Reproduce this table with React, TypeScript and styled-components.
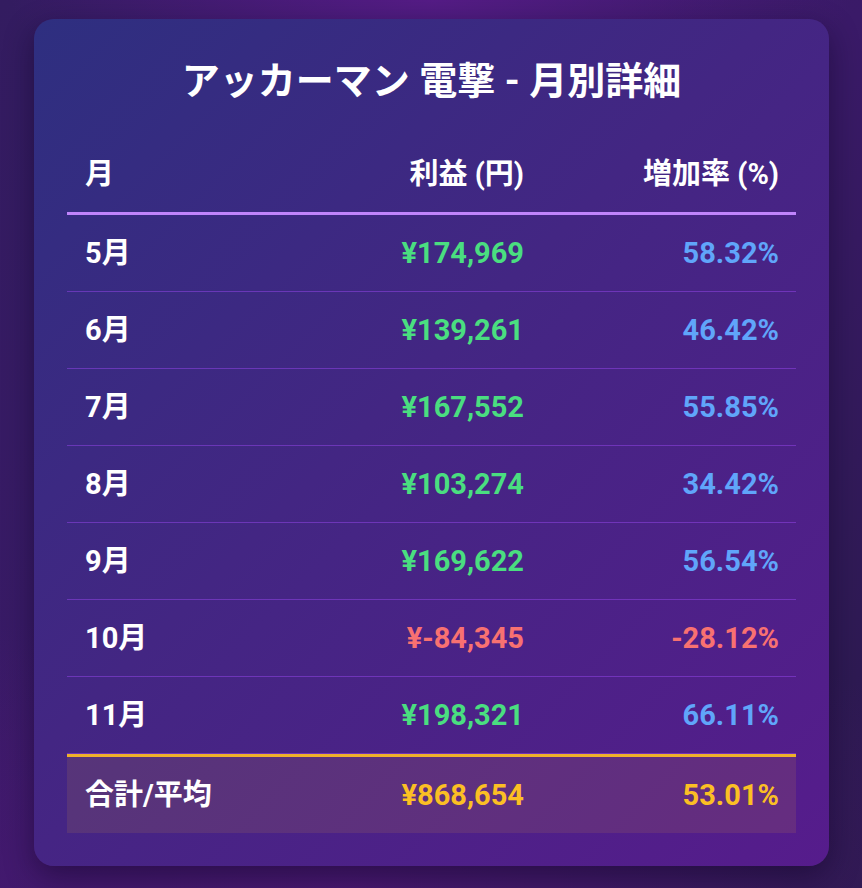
import React from "react";
import styled, { createGlobalStyle } from "styled-components";

const GlobalStyle = createGlobalStyle`
  html, body { margin: 0; padding: 0; }
  body {
    min-height: 888px;
    background:
      radial-gradient(ellipse 420px 120px at 50% 0%, rgba(90, 28, 140, 0.85), rgba(90, 28, 140, 0) 100%),
      radial-gradient(ellipse 700px 300px at 40% 100%, rgba(80, 24, 120, 0.7), rgba(80, 24, 120, 0) 100%),
      linear-gradient(135deg, #331c60 0%, #3a1a68 50%, #2a1a4c 100%);
    font-family: "Roboto", "Noto Sans CJK JP", sans-serif;
  }
`;

const Page = styled.div`
  padding: 19px 33px 21px 34px;
`;

const Card = styled.section`
  border-radius: 20px;
  padding: 32px 33px 33px;
  background: linear-gradient(135deg, #2e2f80 0%, #432683 45%, #561c8c 100%);
  box-shadow: 0 10px 30px rgba(10, 0, 30, 0.45);
`;

const Title = styled.h1`
  margin: 8px 0 33px;
  text-align: center;
  color: #ffffff;
  font-size: 38px;
  line-height: 44px;
  font-weight: 700;
  font-family: "Roboto", "Noto Sans CJK JP", sans-serif;
`;

const Row = styled.div<{ $variant?: "head" | "body" | "foot" }>`
  display: grid;
  grid-template-columns: 1fr 220px 255px;
  border-bottom: ${(p) =>
    p.$variant === "head"
      ? "3px solid #c084fc"
      : p.$variant === "foot"
      ? "none"
      : "1px solid rgba(150, 70, 235, 0.5)"};
  border-top: ${(p) => (p.$variant === "foot" ? "3px solid #efb12a" : "none")};
  background: ${(p) =>
    p.$variant === "foot" ? "rgba(251, 191, 36, 0.1)" : "transparent"};
`;

const Cell = styled.div<{ $align?: "left" | "right"; $color?: string }>`
  padding: 23px 17px 23px 18px;
  font-size: 29px;
  line-height: 30px;
  font-weight: 700;
  text-align: ${(p) => p.$align ?? "left"};
  color: ${(p) => p.$color ?? "#ffffff"};
  white-space: nowrap;
`;

const GREEN = "#4ade80";
const BLUE = "#60a5fa";
const RED = "#f87171";
const GOLD = "#fbbf24";

const rows = [
  { m: "5月", p: 174969, r: "58.32" },
  { m: "6月", p: 139261, r: "46.42" },
  { m: "7月", p: 167552, r: "55.85" },
  { m: "8月", p: 103274, r: "34.42" },
  { m: "9月", p: 169622, r: "56.54" },
  { m: "10月", p: -84345, r: "-28.12" },
  { m: "11月", p: 198321, r: "66.11" },
];

const yen = (n: number) => "¥" + n.toLocaleString("en-US");

export default function App() {
  return (
    <>
      <GlobalStyle />
      <Page>
        <Card>
          <Title>アッカーマン 電撃 - 月別詳細</Title>
          <div>
            <Row $variant="head">
              <Cell>月</Cell>
              <Cell $align="right">利益 (円)</Cell>
              <Cell $align="right">増加率 (%)</Cell>
            </Row>
            {rows.map((r) => {
              const neg = r.p < 0;
              return (
                <Row key={r.m} $variant="body">
                  <Cell>{r.m}</Cell>
                  <Cell $align="right" $color={neg ? RED : GREEN}>
                    {yen(r.p)}
                  </Cell>
                  <Cell $align="right" $color={neg ? RED : BLUE}>
                    {r.r}%
                  </Cell>
                </Row>
              );
            })}
            <Row $variant="foot">
              <Cell>合計/平均</Cell>
              <Cell $align="right" $color={GOLD}>
                ¥868,654
              </Cell>
              <Cell $align="right" $color={GOLD}>
                53.01%
              </Cell>
            </Row>
          </div>
        </Card>
      </Page>
    </>
  );
}
